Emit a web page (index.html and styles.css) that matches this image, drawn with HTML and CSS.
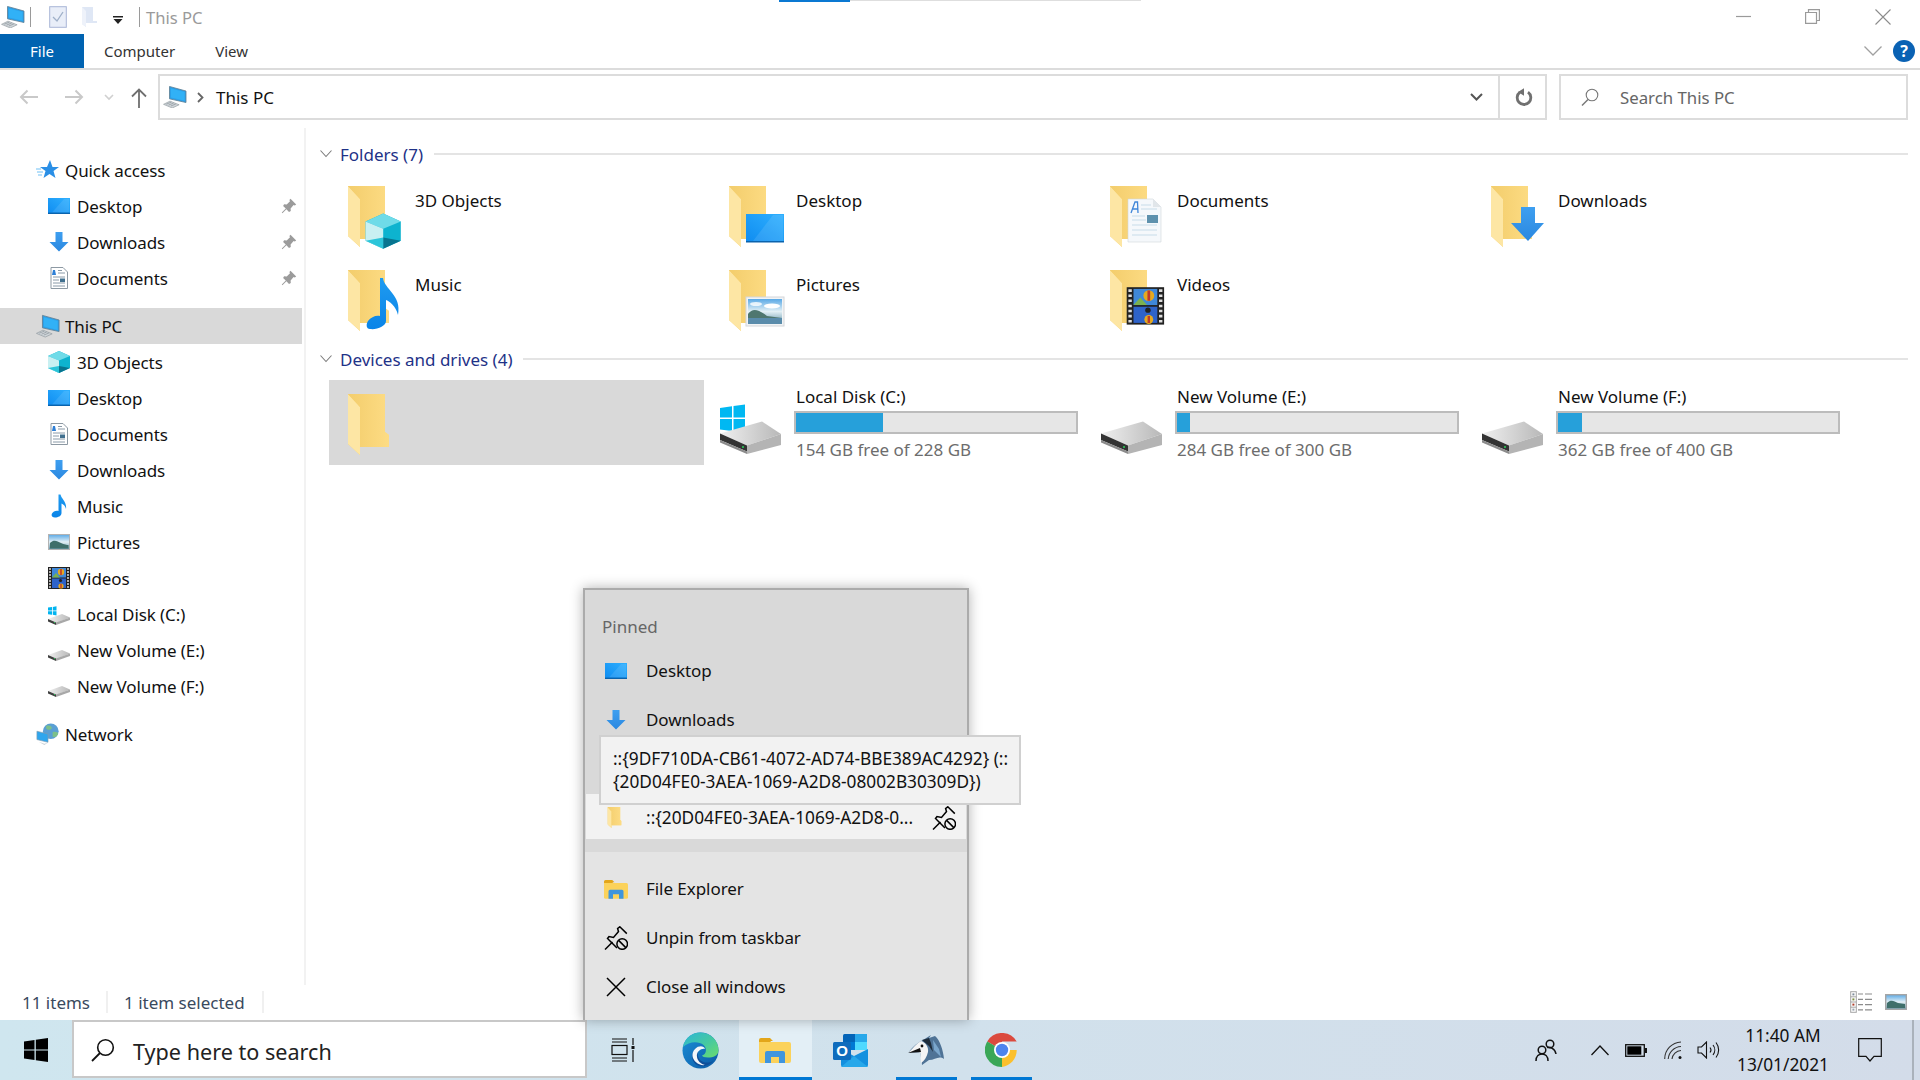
FILE: index.html
```html
<!DOCTYPE html>
<html lang="en">
<head>
<meta charset="utf-8">
<title>This PC</title>
<link rel="stylesheet" href="styles.css">
</head>
<body>
<svg class="defs" aria-hidden="true">
  <defs>
    <linearGradient id="gFolder" x1="0" y1="0" x2="1" y2="0"><stop offset="0" stop-color="#f3cd6c"/><stop offset="1" stop-color="#fddc84"/></linearGradient>
    <linearGradient id="gDesk" x1="0" y1="1" x2="1" y2="0"><stop offset="0" stop-color="#0f8cf0"/><stop offset="1" stop-color="#2fb0ff"/></linearGradient>
    <linearGradient id="gArrow" x1="0" y1="0" x2="0" y2="1"><stop offset="0" stop-color="#3e9ff0"/><stop offset="1" stop-color="#2b88e0"/></linearGradient>
    <linearGradient id="gNote" x1="0" y1="0" x2="0" y2="1"><stop offset="0" stop-color="#1f9bf0"/><stop offset="1" stop-color="#0a84e8"/></linearGradient>
    <linearGradient id="gSky" x1="0" y1="0" x2="0" y2="1"><stop offset="0" stop-color="#5aa9e6"/><stop offset=".5" stop-color="#e3f0f5"/><stop offset="1" stop-color="#5f93a8"/></linearGradient>
    <linearGradient id="gDisk" x1="0" y1="0" x2="1" y2="0"><stop offset="0" stop-color="#f0f0f0"/><stop offset="1" stop-color="#b8b8b8"/></linearGradient>
    <linearGradient id="gEdge" x1="0" y1="0" x2="1" y2="1"><stop offset="0" stop-color="#2bb6d8"/><stop offset=".55" stop-color="#46c9a0"/><stop offset="1" stop-color="#6bdc6e"/></linearGradient>
    <linearGradient id="gEdge2" x1="0" y1="0" x2="1" y2="1"><stop offset="0" stop-color="#1b8fd8"/><stop offset="1" stop-color="#0c59a4"/></linearGradient>

    <symbol id="folder" viewBox="0 0 41 61">
      <path d="M0 0H37V38L41 41V53H12V61L0 50Z" fill="url(#gFolder)"/>
      <path d="M0 0L12 13V61L0 50Z" fill="#fde6a4"/>
      <path d="M37 0V38L41 41V53H12V13L0 0Z" fill="url(#gFolder)"/>
    </symbol>

    <symbol id="i-pc" viewBox="0 0 26 24">
      <path d="M7 0.5L25 5.5V18L7 14Z" fill="#2b9fe8" stroke="#5f7f94" stroke-width=".9"/>
      <path d="M8.6 2.6L23.5 6.6V16.2L8.6 12.6Z" fill="#31b1f6"/>
      <path d="M0.5 20L7.5 16.5L17.5 20.5L10 24Z" fill="#cfd5d9" stroke="#8e979d" stroke-width=".7"/>
      <path d="M3.5 19.8L9 17.6M6 20.8L11.5 18.6M8.5 21.8L14 19.6" stroke="#8e979d" stroke-width=".8"/>
    </symbol>
    <symbol id="i-desk" viewBox="0 0 24 24">
      <rect x="1" y="4" width="22" height="16" fill="url(#gDesk)"/>
      <path d="M5 18.4L17 5H22V18.4Z" fill="#fff" opacity=".1"/>
      <rect x="1" y="18.6" width="22" height="1.4" fill="#0a63ad"/>
    </symbol>
    <symbol id="i-dl" viewBox="0 0 24 24">
      <path d="M8.5 2H15.5V12H21.5L12 21.5L2.5 12H8.5Z" fill="url(#gArrow)"/>
    </symbol>
    <symbol id="i-doc" viewBox="0 0 24 24">
      <path d="M4 1.5H16L20.5 6V22.5H4Z" fill="#fff" stroke="#8d99a3"/>
      <path d="M6 4L8 4L9 9H5Z" fill="#2e7fd6"/>
      <path d="M11 4.5H15M11 7H18M6 11H18M6 14H12M6 17H18M6 20H18" stroke="#8a9aa8"/>
      <rect x="13" y="12.5" width="5" height="3.5" fill="#41708f"/>
    </symbol>
    <symbol id="i-cube" viewBox="0 0 24 24">
      <path d="M12 1L23 6V18L12 23L1 18V6Z" fill="#0db3cf"/>
      <path d="M12 1L23 6L12 10.5L1 6Z" fill="#6fdbe8"/>
      <path d="M1 6L12 10.5V23L1 18Z" fill="#c9f0f2"/>
      <path d="M12 16L23 18L12 23Z" fill="#08748f"/>
      <path d="M12 16L1 18L12 23Z" fill="#2cc5d9"/>
    </symbol>
    <symbol id="i-note" viewBox="0 0 24 24">
      <path d="M11.5 0.5H13.5C14.5 5 20 8 19 15C18.5 12 16 10 14.5 9.5V19C14.5 22 11 23.5 8 23.5C5 23.5 4 21.5 5 19.5C6 17.5 9 16.2 11.5 17Z" fill="url(#gNote)"/>
    </symbol>
    <symbol id="i-pic" viewBox="0 0 24 24">
      <rect x="1.5" y="4.5" width="21" height="15" fill="url(#gSky)" stroke="#b3b3b3"/>
      <path d="M3 13C7 9 10 11 14 13C17 14.5 20 15 21.5 15V18.5H3Z" fill="#3f6f6a"/>
    </symbol>
    <symbol id="i-vid" viewBox="0 0 24 24">
      <rect x="1" y="1" width="22" height="22" fill="#222"/>
      <path d="M2 3h2M2 6h2M2 9h2M2 12h2M2 15h2M2 18h2M2 21h2M20 3h2M20 6h2M20 9h2M20 12h2M20 15h2M20 18h2M20 21h2" stroke="#ddd" stroke-width="1.5"/>
      <rect x="5" y="2" width="14" height="9.5" fill="#3f88d9"/>
      <rect x="5" y="12.5" width="14" height="9.5" fill="#2e63c9"/>
      <path d="M5 11.5L9 7L13 11.5Z" fill="#7bb150"/>
      <circle cx="14" cy="6" r="3.2" fill="#e5a91f"/><path d="M14 3V9" stroke="#c0392b" stroke-width="1.6"/>
      <circle cx="14" cy="20" r="2.6" fill="#e5a91f"/><path d="M14 18V22" stroke="#c0392b" stroke-width="1.4"/>
      <circle cx="13.5" cy="14.5" r="1.6" fill="#222"/>
    </symbol>
    <symbol id="i-disk" viewBox="0 0 24 24">
      <path d="M1 17L15 12L23 15.5L9 21Z" fill="url(#gDisk)"/>
      <path d="M1 17L9 20.5V23L1 19.5Z" fill="#3f3f3f"/>
      <path d="M9 20.5L23 15.5V18L9 23Z" fill="#a8a8a8"/>
      <circle cx="7.5" cy="20.6" r=".6" fill="#29d35a"/>
    </symbol>
    <symbol id="i-cdisk" viewBox="0 0 24 24">
      <use href="#i-disk" width="24" height="24"/>
      <path d="M1 5.5L5 5V8.5H1ZM5.8 4.9L9.5 4.3V8.5H5.8ZM1 9.3H5V12.7L1 12.2ZM5.8 9.3H9.5V13.4L5.8 12.8Z" fill="#00b4f0"/>
    </symbol>
    <symbol id="i-net" viewBox="0 0 26 24">
      <circle cx="16" cy="9" r="8.5" fill="#5a9fd4"/>
      <path d="M11 3C15 2 18 4 17 6C16 8 12 8 11 6ZM18 10C21 9 24 10 24 12C23 15 20 16 18 15Z" fill="#7cc08a"/>
      <path d="M1 9L13 12V21L1 18Z" fill="#2fa6ee" stroke="#7f9cb0" stroke-width=".7"/>
      <path d="M3 20.5L9 22.5L13 21.5L9 24Z" fill="#c8d0d6"/>
    </symbol>
    <symbol id="i-pin" viewBox="0 0 16 16">
      <path d="M9.5 0.8L15.2 6.5L13.8 7.6L12.6 7L9.6 10.4L9.8 13L8 14L5.4 11.2L1.4 15.2L0.8 14.6L4.8 10.6L2.1 8L3.1 6.2L5.7 6.4L9 3.3L8.4 2.1Z" fill="#9b9b9b"/>
    </symbol>
    <symbol id="i-unpin" viewBox="0 0 24 24">
      <g fill="none" stroke="#000" stroke-width="1.5">
        <path d="M1 23.5L8.5 16"/>
        <path d="M13 22L3.5 12.5L5 10.5L9.5 11.5L14.5 5.5L13.6 2.5L15.8 0.8L22.8 7.6"/>
        <circle cx="18.2" cy="18" r="5.3"/>
        <path d="M14.6 14.4L21.8 21.6"/>
      </g>
    </symbol>
    <symbol id="i-explorer" viewBox="0 0 32 26">
      <path d="M0 3A2 2 0 0 1 2 1H11L14 4H12L10 7H0Z" fill="#e3a61a"/>
      <path d="M0 5H30A2 2 0 0 1 32 7V24A2 2 0 0 1 30 26H2A2 2 0 0 1 0 24Z" fill="#fbd25b"/>
      <path d="M6 26V16A2 2 0 0 1 8 14H24A2 2 0 0 1 26 16V26H20V20H12V26Z" fill="#3f95dd"/>
    </symbol>
    <symbol id="i-hdd" viewBox="0 0 62 50">
      <path d="M0 29.5L42 17.5L61 30L27 41.5Z" fill="url(#gDisk)"/>
      <path d="M0 29.5L27 41.5V47.5L0 36Z" fill="#333"/>
      <path d="M0 36L27 47.5V50L0 38.5Z" fill="#8b8b8b"/>
      <path d="M27 41.5L61 30V41L27 50Z" fill="#b4b4b4"/>
      <circle cx="23" cy="43" r="1" fill="#29d35a"/>
    </symbol>
  </defs>
</svg>

<div class="screen">
  <header class="titlebar">
    <svg class="qat-pc" width="24" height="22"><use href="#i-pc"/></svg>
    <span class="qat-sep"></span>
    <svg class="qat-check" width="18" height="22" viewBox="0 0 18 22"><rect x=".7" y=".7" width="16.6" height="20.6" fill="#e9eef8" stroke="#a9b6d6"/><path d="M4 11L8 15L14 6" fill="none" stroke="#9fb0c8" stroke-width="1.3"/></svg>
    <svg class="qat-folder" width="15" height="20" viewBox="0 0 15 20"><path d="M0 0H11V14H15V16H4V20L0 17Z" fill="#dfe7f5"/><path d="M0 0L4 4V20L0 17Z" fill="#eef2fa"/></svg>
    <svg class="qat-drop" width="10" height="8" viewBox="0 0 10 8"><path d="M0 0H10V1.4H0ZM0.5 3H9.5L5 8Z" fill="#222"/></svg>
    <span class="qat-sep qat-sep-2"></span>
    <span class="window-title">This PC</span>
    <div class="window-controls">
      <svg width="15" height="15" viewBox="0 0 15 15"><path d="M0 7.5H15" stroke="#9a9a9a" stroke-width="1.2"/></svg>
      <svg width="15" height="15" viewBox="0 0 15 15"><path d="M3.5 3V.6H14.4V11.5H12M.6 3.5H11.5V14.4H.6Z" fill="none" stroke="#9a9a9a" stroke-width="1.2"/></svg>
      <svg class="ctl-close" width="16" height="16" viewBox="0 0 16 16"><path d="M.5 .5L15.5 15.5M15.5 .5L.5 15.5" stroke="#8c8c8c" stroke-width="1.1"/></svg>
    </div>
  </header>
  <div class="top-strip"><span class="strip-blue"></span><span class="strip-gray"></span></div>

  <nav class="ribbon">
    <span class="tab tab-file">File</span>
    <span class="tab tab-computer">Computer</span>
    <span class="tab tab-view">View</span>
    <svg class="rib-chev" width="18" height="10" viewBox="0 0 18 10"><path d="M.5 .5L9 9L17.5 .5" fill="none" stroke="#a0a0a0" stroke-width="1.3"/></svg>
    <span class="help">?</span>
  </nav>

  <div class="navbar">
    <svg class="nav-arrow nav-back" width="20" height="16" viewBox="0 0 20 16"><path d="M19 8H2M8.5 1.5L2 8L8.5 14.5" fill="none" stroke="#c9c9c9" stroke-width="2"/></svg>
    <svg class="nav-arrow nav-fwd" width="20" height="16" viewBox="0 0 20 16"><path d="M1 8H18M11.5 1.5L18 8L11.5 14.5" fill="none" stroke="#c9c9c9" stroke-width="2"/></svg>
    <svg class="nav-drop" width="10" height="7" viewBox="0 0 10 7"><path d="M1 1L5 5L9 1" fill="none" stroke="#d0d0d0" stroke-width="1.6"/></svg>
    <svg class="nav-up" width="16" height="20" viewBox="0 0 16 20"><path d="M8 20V2M1 8.5L8 1.5L15 8.5" fill="none" stroke="#6f6f6f" stroke-width="1.8"/></svg>
    <div class="addr">
      <svg class="addr-pc" width="24" height="22"><use href="#i-pc"/></svg>
      <svg class="addr-chev" width="7" height="11" viewBox="0 0 7 11"><path d="M1 1L5.5 5.5L1 10" fill="none" stroke="#666" stroke-width="1.8"/></svg>
      <span class="addr-text">This PC</span>
      <svg class="addr-drop" width="13" height="8" viewBox="0 0 13 8"><path d="M1 1L6.5 6.5L12 1" fill="none" stroke="#555" stroke-width="2"/></svg>
      <span class="addr-refresh">
        <svg width="18" height="18" viewBox="0 0 18 18"><path d="M5 4.2A6.8 6.8 0 1 0 13 4.2" fill="none" stroke="#707070" stroke-width="2.8"/><path d="M9 .2V7.8L3 4Z" fill="#707070"/></svg>
      </span>
    </div>
    <div class="search">
      <svg width="18" height="18" viewBox="0 0 18 18"><circle cx="11" cy="7" r="5.8" fill="none" stroke="#777" stroke-width="1.1"/><path d="M7 11.5L1 17.5" stroke="#777" stroke-width="1.4"/></svg>
      <span>Search This PC</span>
    </div>
  </div>

  <div class="body">
    <aside class="sidebar">
      <div class="row row-root"><svg class="ico-root" viewBox="0 0 24 24"><path d="M14 2L16.5 9H23L17.5 13L19.5 20L13.5 16L7.5 20L9.5 13L4 9L11 9Z" fill="#2a8fe6"/><path d="M0 11H5M1 14H7M2 17H6" stroke="#6ec0f5" stroke-width="1"/></svg><span>Quick access</span></div>
      <div class="row row-child"><svg class="ico"><use href="#i-desk"/></svg><span>Desktop</span><svg class="pin"><use href="#i-pin"/></svg></div>
      <div class="row row-child"><svg class="ico"><use href="#i-dl"/></svg><span>Downloads</span><svg class="pin"><use href="#i-pin"/></svg></div>
      <div class="row row-child"><svg class="ico"><use href="#i-doc"/></svg><span>Documents</span><svg class="pin"><use href="#i-pin"/></svg></div>
      <div class="row row-root row-sel row-gap"><svg class="ico-root"><use href="#i-pc"/></svg><span>This PC</span></div>
      <div class="row row-child"><svg class="ico"><use href="#i-cube"/></svg><span>3D Objects</span></div>
      <div class="row row-child"><svg class="ico"><use href="#i-desk"/></svg><span>Desktop</span></div>
      <div class="row row-child"><svg class="ico"><use href="#i-doc"/></svg><span>Documents</span></div>
      <div class="row row-child"><svg class="ico"><use href="#i-dl"/></svg><span>Downloads</span></div>
      <div class="row row-child"><svg class="ico"><use href="#i-note"/></svg><span>Music</span></div>
      <div class="row row-child"><svg class="ico"><use href="#i-pic"/></svg><span>Pictures</span></div>
      <div class="row row-child"><svg class="ico"><use href="#i-vid"/></svg><span>Videos</span></div>
      <div class="row row-child"><svg class="ico"><use href="#i-cdisk"/></svg><span>Local Disk (C:)</span></div>
      <div class="row row-child"><svg class="ico"><use href="#i-disk"/></svg><span>New Volume (E:)</span></div>
      <div class="row row-child"><svg class="ico"><use href="#i-disk"/></svg><span>New Volume (F:)</span></div>
      <div class="row row-root row-gap"><svg class="ico-root"><use href="#i-net"/></svg><span>Network</span></div>
    </aside>

    <main class="content">
      <div class="group-head">
        <svg class="group-chev" width="12" height="8" viewBox="0 0 12 8"><path d="M.5 .5L6 6.5L11.5 .5" fill="none" stroke="#7c7c7c" stroke-width="1.1"/></svg>
        <span class="group-name">Folders (7)</span><span class="group-line"></span>
      </div>
      <div class="tiles">
        <div class="tile">
          <svg class="tile-icon" viewBox="0 0 56 64"><use href="#folder" width="41" height="61"/><g transform="translate(16 26) scale(1.6)"><use href="#i-cube" width="24" height="24"/></g></svg>
          <span class="tile-label">3D Objects</span>
        </div>
        <div class="tile">
          <svg class="tile-icon" viewBox="0 0 56 64"><use href="#folder" width="41" height="61"/><rect x="17" y="28" width="38" height="28" fill="url(#gDesk)"/><path d="M24 55L44 29H54V55Z" fill="#fff" opacity=".1"/><rect x="17" y="55" width="38" height="1.5" fill="#0a63ad"/></svg>
          <span class="tile-label">Desktop</span>
        </div>
        <div class="tile">
          <svg class="tile-icon" viewBox="0 0 56 64"><use href="#folder" width="41" height="61"/><path d="M18 13H43L51 21V56H18Z" fill="#f5f8fb" stroke="#d0d6da" stroke-width=".6"/><path d="M43 13V21H51" fill="#e1e6ea"/><path d="M21 27L25 16H27.5L28 27M23 23H28" fill="none" stroke="#3f86d9" stroke-width="1.3"/><path d="M31 19H41M31 23H47M22 30H35M22 34H36M22 39H47M22 44H47M22 49H47" stroke="#c8dbe9" stroke-width="1.2"/><rect x="37" y="29" width="11" height="8" fill="#5e91ad"/></svg>
          <span class="tile-label">Documents</span>
        </div>
        <div class="tile">
          <svg class="tile-icon" viewBox="0 0 56 64"><use href="#folder" width="41" height="61"/><path d="M30 21H44V37H53L37 55L20 37H30Z" fill="url(#gArrow)"/></svg>
          <span class="tile-label">Downloads</span>
        </div>
        <div class="tile">
          <svg class="tile-icon" viewBox="0 0 56 64"><use href="#folder" width="41" height="61"/><path d="M22 59C18 59 18 54 20 51C23 47 28 45 32 46V8H35C36 19 54 25 50 45C48 36 41 31 38 30V51C38 56 29 60 22 59Z" fill="url(#gNote)"/></svg>
          <span class="tile-label">Music</span>
        </div>
        <div class="tile">
          <svg class="tile-icon" viewBox="0 0 56 64"><use href="#folder" width="41" height="61"/><rect x="17" y="27" width="38" height="29" fill="#f1f3f5" stroke="#d3d6d9"/><rect x="19" y="29" width="34" height="25" fill="url(#gSky)"/><ellipse cx="43" cy="36" rx="8" ry="2.5" fill="#fff"/><ellipse cx="27" cy="34" rx="6" ry="2" fill="#fff" opacity=".8"/><path d="M19 44C24 37 30 40 38 46L53 48V54H19Z" fill="#4f776f"/><rect x="19" y="48" width="34" height="6" fill="#5a8cab"/></svg>
          <span class="tile-label">Pictures</span>
        </div>
        <div class="tile">
          <svg class="tile-icon" viewBox="0 0 56 64"><use href="#folder" width="41" height="61"/><g transform="translate(15 15.5) scale(1.7)"><use href="#i-vid" width="24" height="24"/></g></svg>
          <span class="tile-label">Videos</span>
        </div>
      </div>

      <div class="group-head group-head-2">
        <svg class="group-chev" width="12" height="8" viewBox="0 0 12 8"><path d="M.5 .5L6 6.5L11.5 .5" fill="none" stroke="#7c7c7c" stroke-width="1.1"/></svg>
        <span class="group-name">Devices and drives (4)</span><span class="group-line"></span>
      </div>
      <div class="tiles drives">
        <div class="tile tile-sel"><svg class="tile-icon" viewBox="0 0 56 64"><use href="#folder" width="41" height="61"/></svg></div>
        <div class="drive">
          <svg class="drive-icon" width="62" height="50" viewBox="0 0 62 50"><path d="M0 4L12 2.3V13.5H0ZM13.5 2L25 .5V13.5H13.5ZM0 15H12V27L0 25.5ZM13.5 15H25V29L13.5 27.5Z" fill="#00b8f2"/><use href="#i-hdd" width="62" height="50"/></svg>
          <div class="drive-info">
            <span class="drive-name">Local Disk (C:)</span>
            <span class="bar"><span class="bar-fill" style="width:31%"></span></span>
            <span class="drive-free">154 GB free of 228 GB</span>
          </div>
        </div>
        <div class="drive">
          <svg class="drive-icon" width="62" height="50"><use href="#i-hdd"/></svg>
          <div class="drive-info">
            <span class="drive-name">New Volume (E:)</span>
            <span class="bar"><span class="bar-fill" style="width:4.6%"></span></span>
            <span class="drive-free">284 GB free of 300 GB</span>
          </div>
        </div>
        <div class="drive">
          <svg class="drive-icon" width="62" height="50"><use href="#i-hdd"/></svg>
          <div class="drive-info">
            <span class="drive-name">New Volume (F:)</span>
            <span class="bar"><span class="bar-fill" style="width:8.6%"></span></span>
            <span class="drive-free">362 GB free of 400 GB</span>
          </div>
        </div>
      </div>
    </main>
  </div>

  <footer class="statusbar">
    <span class="st st-a">11 items</span>
    <span class="st st-b">1 item selected</span>
    <svg class="view-details" width="22" height="22" viewBox="0 0 22 22"><rect x=".7" y=".7" width="5.6" height="20.6" fill="#fff" stroke="#a5a5a5"/><path d="M.7 5.8H6.3M.7 11H6.3M.7 16.2H6.3" stroke="#a5a5a5"/><rect x="2.4" y="2.4" width="2" height="2" fill="#7f8c99"/><rect x="2.4" y="7.4" width="2" height="2" fill="#7e8f3f"/><rect x="2.4" y="12.6" width="2" height="2" fill="#b0402c"/><rect x="2.4" y="17.6" width="2" height="2" fill="#9aa5ae"/><path d="M8 3H13M15 3H22M8 8.3H13M15 8.3H22M8 13.6H13M15 13.6H22M8 18.9H13M15 18.9H22" stroke="#8c8c8c" stroke-width="1.2"/></svg>
    <svg class="view-tiles" width="22" height="16" viewBox="0 0 22 16"><rect x=".7" y=".7" width="20.6" height="14.6" fill="url(#gSky)" stroke="#a5a5a5" stroke-width="1.4"/><path d="M2 9C6 5 9 7 13 9L20 10V14H2Z" fill="#3f6f6a"/></svg>
  </footer>

  <div class="taskbar">
    <svg class="start" width="24" height="24" viewBox="0 0 24 24"><path d="M0 3.5L10.5 2V11.4H0ZM11.8 1.8L24 0V11.4H11.8ZM0 12.6H10.5V22L0 20.5ZM11.8 12.6H24V24L11.8 22.2Z" fill="#000"/></svg>
    <div class="tb-search">
      <svg width="24" height="24" viewBox="0 0 24 24"><circle cx="14.5" cy="9.5" r="7.8" fill="none" stroke="#111" stroke-width="1.6"/><path d="M9 15L1 23" stroke="#111" stroke-width="1.8"/></svg>
      <span>Type here to search</span>
    </div>
    <div class="tasks">
      <div class="task">
        <svg class="task-view" width="24" height="24" viewBox="0 0 24 24"><path d="M1 1H16M1 4H16M1 20H16M1 23H16" stroke="#111" stroke-width="1.2"/><rect x="1" y="7.5" width="15" height="9" fill="none" stroke="#111" stroke-width="1.2"/><path d="M22 0V7M22 12V24" stroke="#111" stroke-width="1.2"/><rect x="20.5" y="8" width="3" height="3" fill="#111"/></svg>
        <span class="task-line task-line-none"></span>
      </div>
      <div class="task">
        <svg width="37" height="37" viewBox="0 0 37 37"><circle cx="18.5" cy="18.5" r="18" fill="url(#gEdge2)"/><path d="M1 15C3 5 11 .5 18.5 .5C29 .5 36.5 9 36.5 18C36.5 24 31 25.5 26 25.5C22 25.5 20.5 24.5 20 23.5C25 22 25 16 21.5 13C17 9 7 9 1 15Z" fill="url(#gEdge)"/><path d="M13.5 32C9 28 9 21 13 17C16 14 20 14 20 14C15 17 14.5 24 18 28C21 31 27 31.5 31 29C28 33 20 37 13.5 32Z" fill="#0f4f9a"/><path d="M13 17C17 13 22 14 23 17C20 16 14 19 15 25C15.5 29 19 32 23 33C17 34 11 29 10.5 24C10.3 21 11 19 13 17Z" fill="#fff" opacity=".95"/></svg>
        <span class="task-line task-line-none"></span>
      </div>
      <div class="task task-active">
        <svg width="32" height="26"><use href="#i-explorer"/></svg>
        <span class="task-line task-line-full"></span>
      </div>
      <div class="task">
        <svg width="35" height="33" viewBox="0 0 35 33"><rect x="10" y="0" width="24" height="16" rx="1.5" fill="#0364b8"/><rect x="22" y="0" width="12" height="8" fill="#28a8ea"/><rect x="10" y="8" width="12" height="8" fill="#0078d4"/><rect x="22" y="8" width="12" height="8" fill="#50d9ff"/><path d="M8 15L21 22L35 15V31A2 2 0 0 1 33 33H10A2 2 0 0 1 8 31Z" fill="#1490df"/><path d="M8 33L21 22L35 33Z" fill="#28a8ea"/><rect x="0" y="8" width="18" height="18" rx="1.5" fill="#0f6cbd"/><text x="9" y="22" class="ol-o">O</text></svg>
        <span class="task-line task-line-none"></span>
      </div>
      <div class="task">
        <svg width="36" height="30" viewBox="0 0 36 30"><path d="M15 5L23 0L21 3L27 1C32 5 35 15 36 24C31 20 27 25 21 25L14 30C14 25 12 21 13 18L1 17C3 14 7 9 15 5Z" fill="#4f7396"/><path d="M13 6C17 7 21 12 20 17C19 22 16 26 13 28C13 24 12 21 13 18C10 17 6 17 1 17C5 13 9 8 13 6Z" fill="#f4f4f4"/><path d="M0 18L12 13L13 17Z" fill="#111"/><path d="M14 5L21 3L23 8L25 17L21 11Z" fill="#1e2c3a"/><circle cx="14" cy="11" r="1.4" fill="#111"/><path d="M25 5L31 14L33 22L26 15Z" fill="#7aa6cc"/></svg>
        <span class="task-line"></span>
      </div>
      <div class="task">
        <svg width="34" height="34" viewBox="0 0 34 34"><path d="M17 17L2.2 8.5A17 17 0 0 1 31.7 8.5H17Z" fill="#db4a3e"/><path d="M17 17H31.7A17 17 0 0 1 17 34Z" fill="#fbc02d"/><path d="M17 17V34A17 17 0 0 1 2.2 8.5Z" fill="#3aa757"/><circle cx="17" cy="17" r="8" fill="#fff"/><circle cx="17" cy="17" r="6.2" fill="#4d84ee"/></svg>
        <span class="task-line"></span>
      </div>
    </div>
    <div class="tray">
      <svg class="tr-people" width="22" height="23" viewBox="0 0 22 23"><circle cx="15" cy="5" r="3.8" fill="none" stroke="#111" stroke-width="1.5"/><circle cx="7" cy="11" r="3.8" fill="none" stroke="#111" stroke-width="1.5"/><path d="M1 22C1 17 4 15 7 15C10 15 13 17 13 22M12 8.5C15 8 20 9 21 15" fill="none" stroke="#111" stroke-width="1.5"/></svg>
      <svg class="tr-chev" width="18" height="11" viewBox="0 0 18 11"><path d="M.5 10L9 1L17.5 10" fill="none" stroke="#111" stroke-width="1.3"/></svg>
      <svg class="tr-batt" width="22" height="13" viewBox="0 0 22 13"><rect x=".7" y=".7" width="18.6" height="11.6" fill="none" stroke="#111" stroke-width="1.3"/><rect x="2.3" y="2.3" width="14" height="8.4" fill="#000"/><rect x="20" y="4" width="2" height="5" fill="#111"/></svg>
      <svg class="tr-wifi" width="18" height="18" viewBox="0 0 18 18"><path d="M.7 18A17 17 0 0 1 17 1M4.2 18A13.5 13.5 0 0 1 17 5.5M8 18A9.5 9.5 0 0 1 17 9.5" fill="none" stroke="#333" stroke-width="1.1"/><circle cx="16" cy="16.5" r="1.5" fill="#111"/></svg>
      <svg class="tr-vol" width="23" height="18" viewBox="0 0 23 18"><path d="M1 6H4.5L9.5 1V17L4.5 12H1Z" fill="none" stroke="#111" stroke-width="1.1"/><path d="M13 6.5A4 4 0 0 1 13 11.5M16 4A8 8 0 0 1 16 14M19 1.5A12 12 0 0 1 19 16.5" fill="none" stroke="#111" stroke-width="1.1"/></svg>
      <div class="clock"><span>11:40 AM</span><span>13/01/2021</span></div>
      <svg class="tr-note" width="24" height="24" viewBox="0 0 24 24"><path d="M.7 .7H23.3V18.3H16L12 23L8 18.3H.7Z" fill="none" stroke="#111" stroke-width="1.2"/></svg>
      <span class="tr-end"></span>
    </div>
  </div>

  <section class="jumplist">
    <div class="jl-top">
      <div class="jl-label">Pinned</div>
      <div class="jl-row"><svg class="jl-ico"><use href="#i-desk"/></svg><span>Desktop</span></div>
      <div class="jl-row"><svg class="jl-ico"><use href="#i-dl"/></svg><span>Downloads</span></div>
      <div class="jl-spacer"></div>
      <div class="jl-row jl-hover"><svg class="jl-ico-folder" viewBox="0 0 41 61"><use href="#folder" width="41" height="61"/></svg><span class="guid">::{20D04FE0-3AEA-1069-A2D8-0...</span><svg class="jl-unpin"><use href="#i-unpin"/></svg></div>
    </div>
    <div class="jl-bottom">
      <div class="jl-row"><svg class="jl-ico jl-ico-ex"><use href="#i-explorer"/></svg><span>File Explorer</span></div>
      <div class="jl-row"><svg class="jl-ico"><use href="#i-unpin"/></svg><span>Unpin from taskbar</span></div>
      <div class="jl-row"><svg class="jl-ico" viewBox="0 0 24 24"><path d="M3 3L21 21M21 3L3 21" stroke="#000" stroke-width="1.5"/></svg><span>Close all windows</span></div>
    </div>
  </section>
  <div class="tooltip">::{9DF710DA-CB61-4072-AD74-BBE389AC4292} (::<br>{20D04FE0-3AEA-1069-A2D8-08002B30309D})</div>
</div>
</body>
</html>
```

FILE: styles.css
```css
* { box-sizing: border-box; }
html, body { margin: 0; padding: 0; background: #fff; }
body { font-family: "Noto Sans", "Open Sans", "Liberation Sans", sans-serif; font-size: 17px; color: #111; }
.defs { display: block; width: 0; height: 0; overflow: hidden; }
svg { display: block; flex: none; }

.screen { position: relative; width: 1920px; height: 1080px; overflow: hidden; display: flex; flex-direction: column; background: #fff; }

/* Title bar */
.titlebar { height: 34px; flex: none; display: flex; align-items: center; padding-left: 1px; }
.qat-pc { margin-top: -1px; }
.qat-sep { width: 1px; height: 20px; background: #9a9a9a; margin-left: 5px; }
.qat-check { margin-left: 18px; }
.qat-folder { margin-left: 15px; }
.qat-drop { margin-left: 16px; margin-top: 6px; }
.qat-sep-2 { margin-left: 16px; }
.window-title { margin-left: 6px; color: #9a9a9a; font-size: 16.6px; }
.window-controls { margin-left: auto; display: flex; align-items: center; margin-top: -1px; margin-right: 29px; gap: 54px; }
.ctl-close { margin-left: 1px; }
.top-strip { position: absolute; left: 779px; top: 0; display: flex; }
.strip-blue { width: 71px; height: 2px; background: #0a78d2; }
.strip-gray { width: 291px; height: 1px; background: #dedede; }

/* Ribbon */
.ribbon { height: 36px; flex: none; display: flex; align-items: flex-start; border-bottom: 2px solid #dcdcdc; }
.tab { height: 34px; display: flex; align-items: center; font-size: 15px; color: #333; }
.tab-file { width: 84px; justify-content: center; background: #0063b1; color: #fff; }
.tab-computer { margin-left: 20px; }
.tab-view { margin-left: 40px; }
.rib-chev { margin-left: auto; margin-top: 12px; }
.help { width: 22px; height: 22px; margin: 6px 5px 0 11px; border-radius: 50%; background: #0a62b4; color: #fff; display: flex; align-items: center; justify-content: center; font-size: 16px; font-weight: 700; }

/* Address row */
.navbar { height: 58px; flex: none; display: flex; align-items: center; padding: 4px 0 8px; }
.nav-arrow { flex: none; }
.nav-back { margin-left: 19px; }
.nav-fwd { margin-left: 25px; }
.nav-drop { margin-left: 20px; }
.nav-up { margin-left: 17px; margin-top: 2px; }
.addr { width: 1389px; height: 46px; margin-left: 11px; border: 2px solid #dcdcdc; display: flex; align-items: center; }
.addr-pc { margin-left: 3px; }
.addr-chev { margin-left: 10px; }
.addr-text { margin-left: 12px; font-size: 17px; color: #111; }
.addr-drop { margin-left: auto; margin-right: 15px; }
.addr-refresh { width: 47px; height: 100%; padding-left: 2px; border-left: 2px solid #dcdcdc; display: flex; align-items: center; justify-content: center; }
.search { width: 349px; height: 46px; margin-left: 12px; border: 2px solid #dcdcdc; display: flex; align-items: center; padding-left: 20px; color: #666; font-size: 16.8px; }
.search span { margin-left: 21px; }

/* Body */
.body { flex: 1; min-height: 0; display: flex; }
.sidebar { width: 306px; flex: none; padding-top: 24px; border-right: 2px solid #f2f2f2; }
.row { height: 36px; width: 302px; display: flex; align-items: center; font-size: 17px; letter-spacing: -.1px; color: #111; }
.row-root { padding-left: 36px; }
.row-child { padding-left: 47px; }
.row-gap { margin-top: 12px; }
.row-sel { background: #d9d9d9; }
.ico-root { width: 24px; height: 24px; margin-right: 5px; }
.ico { width: 24px; height: 24px; margin-right: 6px; }
.pin { width: 16px; height: 16px; margin-left: auto; margin-right: 5px; }

.content { flex: 1; min-width: 0; padding-top: 14px; padding-left: 14px; padding-right: 12px; }
.group-head { height: 24px; display: flex; align-items: center; }
.group-head-2 { margin-top: 9px; }
.group-chev { margin-right: 8px; }
.group-name { color: #1e3287; font-size: 17px; }
.group-line { flex: 1; height: 2px; margin-left: 11px; background: #e4e4e4; }
.tiles { display: grid; grid-template-columns: repeat(4, 375px); grid-auto-rows: 84px; column-gap: 6px; margin-top: 4px; margin-left: 9px; }
.drives { grid-auto-rows: 85px; margin-top: 9px; }
.tile { display: flex; align-items: flex-start; padding: 16px 0 0 19px; }
.tile-icon { width: 56px; height: 64px; margin-right: 11px; }
.tile-label { margin-top: 3px; font-size: 17px; line-height: 24px; color: #111; }
.tile-sel { background: #d9d9d9; padding-top: 14px; }
.drive { display: flex; align-items: flex-start; padding-left: 10px; }
.drive-icon { margin-top: 24px; margin-right: 12px; }
.drive-info { width: 284px; padding-top: 5px; display: flex; flex-direction: column; font-size: 17px; line-height: 24px; }
.drive-name { padding-left: 2px; color: #111; }
.bar { display: block; height: 23px; margin-top: 2px; background: #e6e6e6; border: 2px solid #bcbcbc; }
.bar-fill { display: block; height: 100%; background: #26a0da; }
.drive-free { padding-left: 2px; margin-top: 4px; color: #6d6d6d; }

/* Status bar */
.statusbar { height: 35px; flex: none; display: flex; align-items: center; font-size: 17px; color: #3a4a5e; padding-bottom: 1px; }
.st { height: 22px; display: flex; align-items: center; border-right: 2px solid #f0f0f0; }
.st-a { margin-left: 22px; padding-right: 16px; }
.st-b { margin-left: 16px; padding-right: 17px; }
.view-details { margin-left: auto; }
.view-tiles { margin-left: 13px; margin-right: 13px; }

/* Taskbar */
.taskbar { height: 60px; flex: none; display: flex; align-items: stretch; background: linear-gradient(90deg, #cfe6ef 0%, #d1e1ec 50%, #d3dce9 100%); }
.start { margin: 18px 24px 0 24px; }
.tb-search { width: 515px; height: 58px; border: 2px solid #c8c8c8; background: #fff; display: flex; align-items: center; padding: 2px 0 0 17px; font-size: 21.6px; color: #222; }
.tb-search span { margin-left: 18px; padding-top: 2px; }
.tasks { display: flex; }
.task { width: 75.4px; height: 60px; padding-top: 3px; display: flex; flex-direction: column; align-items: center; }
.task svg { margin: auto 0; }
.task .task-view { margin-right: 3px; }
.task-active { background: #e3eff6; width: 73px; margin: 0 1.2px; }
.task-line { width: 61px; height: 3px; background: #0078d4; flex: none; }
.task-line-none { background: transparent; }
.task-line-full { width: 100%; }
.ol-o { font: 700 15px "Liberation Sans", sans-serif; fill: #fff; text-anchor: middle; }
.tray { margin-left: auto; display: flex; align-items: center; }
.tr-chev { margin-left: 34px; }
.tr-batt { margin-left: 16px; }
.tr-wifi { margin-left: 17px; }
.tr-vol { margin-left: 15px; }
.clock { margin-left: 17px; width: 92px; display: flex; flex-direction: column; align-items: center; font-size: 17.3px; line-height: 29px; color: #111; }
.tr-note { margin-left: 29px; }
.tr-end { width: 2px; height: 60px; margin-left: 30px; margin-right: 6px; background: #aab2bb; }

/* Jump list */
.jumplist { position: absolute; left: 583px; top: 588px; width: 386px; height: 432px; display: flex; flex-direction: column; border: 2px solid #ababab; border-bottom: 0; box-shadow: 0 0 12px rgba(0,0,0,.3); font-size: 17px; color: #111; }
.jl-top { height: 262px; flex: none; background: #d9d9d9; }
.jl-bottom { flex: 1; background: #e4e4e4; padding-top: 12px; }
.jl-label { height: 26px; margin: 23px 0 7px; padding-left: 17px; color: #666; display: flex; align-items: center; }
.jl-row { height: 49px; display: flex; align-items: center; padding-left: 19px; letter-spacing: -.05px; }
.jl-spacer { height: 47px; }
.jl-ico { width: 24px; height: 24px; margin-right: 18px; }
.jl-ico-ex { height: 20px; }
.jl-ico-folder { width: 15px; height: 21px; margin: 0 24px 0 3px; }
.jl-hover { height: 45px; margin: 3px 1px 0; padding-left: 18px; padding-top: 2px; background: #f2f2f2; }
.guid { font-size: 17.3px; letter-spacing: 0; }
.jl-unpin { width: 24px; height: 24px; margin-left: auto; margin-right: 10px; }

.tooltip { position: absolute; left: 599px; top: 735px; width: 422px; height: 70px; padding: 10px 0 0 12px; border: 2px solid #d0d0d0; background: #f2f2f2; font-size: 17.25px; line-height: 23px; color: #111; white-space: nowrap; }
```
